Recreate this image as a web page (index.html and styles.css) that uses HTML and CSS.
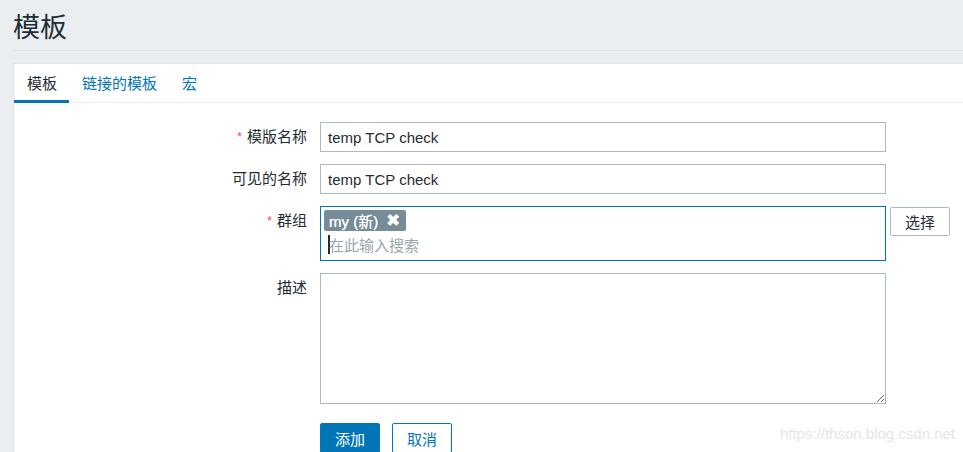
FILE: index.html
```html
<!DOCTYPE html>
<html lang="zh-CN">
<head>
  <meta charset="UTF-8">
  <title>模板</title>
  <link rel="stylesheet" href="styles.css">
</head>
<body>
  <div class="header">
    <h1>模板</h1>
  </div>

  <div class="card">
    <ul class="tabs">
      <li class="tab active">模板</li>
      <li class="tab"><a href="#">链接的模板</a></li>
      <li class="tab"><a href="#">宏</a></li>
    </ul>

    <form class="form">
      <label class="form-label"><span class="req">*</span>模版名称</label>
      <input class="text-input" type="text" value="temp TCP check">
      <div></div>

      <label class="form-label">可见的名称</label>
      <input class="text-input" type="text" value="temp TCP check">
      <div></div>

      <label class="form-label"><span class="req">*</span>群组</label>
      <div class="multiselect">
        <span class="tag">my (新)<span class="tag-remove">&#10006;</span></span>
        <div class="search"><span class="caret"></span><span class="placeholder">在此输入搜索</span></div>
      </div>
      <div><button type="button" class="btn-alt">选择</button></div>

      <label class="form-label">描述</label>
      <textarea class="textarea"></textarea>
      <div></div>

      <div></div>
      <div class="buttons">
        <button type="button" class="btn-primary">添加</button>
        <button type="button" class="btn-cancel">取消</button>
      </div>
      <div></div>
    </form>
  </div>

  <div class="watermark">https://thson.blog.csdn.net</div>
</body>
</html>
```

FILE: styles.css
```css
body {
  margin: 0;
  background-color: #ebeef0;
  font-family: "Liberation Sans", Arial, "Noto Sans CJK SC", sans-serif;
  font-size: 15px;
  color: #1f2c33;
  height: 452px;
  overflow: hidden;
  position: relative;
}
.header {
  margin-left: 13px;
  height: 51px;
  border-bottom: 1px solid #dfe4e7;
  box-sizing: border-box;
}
.header h1 {
  margin: 0;
  padding-top: 10px;
  font-size: 27px;
  font-weight: normal;
  line-height: 36px;
  color: #1f2c33;
}
.card {
  margin: 12px 0 0 13px;
  background: #fff;
  border: 1px solid #dfe4e7;
  border-right: 0;
  height: 400px;
}
.tabs {
  display: flex;
  list-style: none;
  margin: 0;
  padding: 0;
  height: 38px;
  border-bottom: 1px solid #ebeef0;
}
.tab {
  box-sizing: border-box;
  height: 39px;
  padding: 4px 12px 0 13px;
  line-height: 32px;
  border-bottom: 3px solid transparent;
}
.tab a {
  color: #0275b8;
  text-decoration: none;
}
.tab.active {
  border-bottom-color: #0275b8;
}
.form {
  display: grid;
  grid-template-columns: 293px 566px auto;
  column-gap: 13px;
  row-gap: 12px;
  padding-top: 19px;
}
.form-label {
  text-align: right;
  line-height: 30px;
}
.req {
  color: #e45959;
  margin-right: 5px;
  font-size: 13px;
  vertical-align: 1px;
}
.text-input {
  box-sizing: border-box;
  height: 30px;
  border: 1px solid #acbbc2;
  padding: 0 7px;
  font-family: inherit;
  font-size: 15px;
  color: #1f2c33;
  outline: none;
}
.multiselect {
  box-sizing: border-box;
  height: 55px;
  border: 1px solid #0275b8;
  padding: 3px 3px 0;
}
.tag {
  display: inline-flex;
  align-items: center;
  height: 21px;
  padding: 0 6px 0 5px;
  background: #768d99;
  color: #fff;
  border-radius: 2px;
  text-shadow: 0 0 0.4px #fff;
}
.tag-remove {
  margin-left: 8px;
  font-size: 17px;
  line-height: 17px;
}
.search {
  display: flex;
  align-items: center;
  height: 26px;
  padding-left: 4px;
}
.caret {
  width: 2px;
  height: 19px;
  background: #1f2c33;
  margin-right: -1px;
}
.placeholder {
  color: #9aa6ad;
}
.btn-alt {
  box-sizing: border-box;
  margin: 1px 0 0 -9px;
  width: 60px;
  height: 29px;
  background: #fff;
  border: 1px solid #acbbc2;
  border-radius: 2px;
  font-family: inherit;
  font-size: 15px;
  color: #1f2c33;
}
.textarea {
  box-sizing: border-box;
  height: 131px;
  border: 1px solid #acbbc2;
  resize: both;
  outline: none;
}
.buttons {
  display: flex;
  gap: 12px;
  margin-top: 7px;
}
.btn-primary,
.btn-cancel {
  box-sizing: border-box;
  width: 60px;
  height: 30px;
  border-radius: 2px;
  font-family: inherit;
  font-size: 15px;
}
.btn-primary {
  background: #0275b8;
  border: 1px solid #0275b8;
  color: #fff;
}
.btn-cancel {
  background: #fff;
  border: 1px solid #0275b8;
  color: #0275b8;
}
.watermark {
  position: absolute;
  right: 8px;
  bottom: 10px;
  font-size: 15px;
  color: #e4e6e8;
}
```
